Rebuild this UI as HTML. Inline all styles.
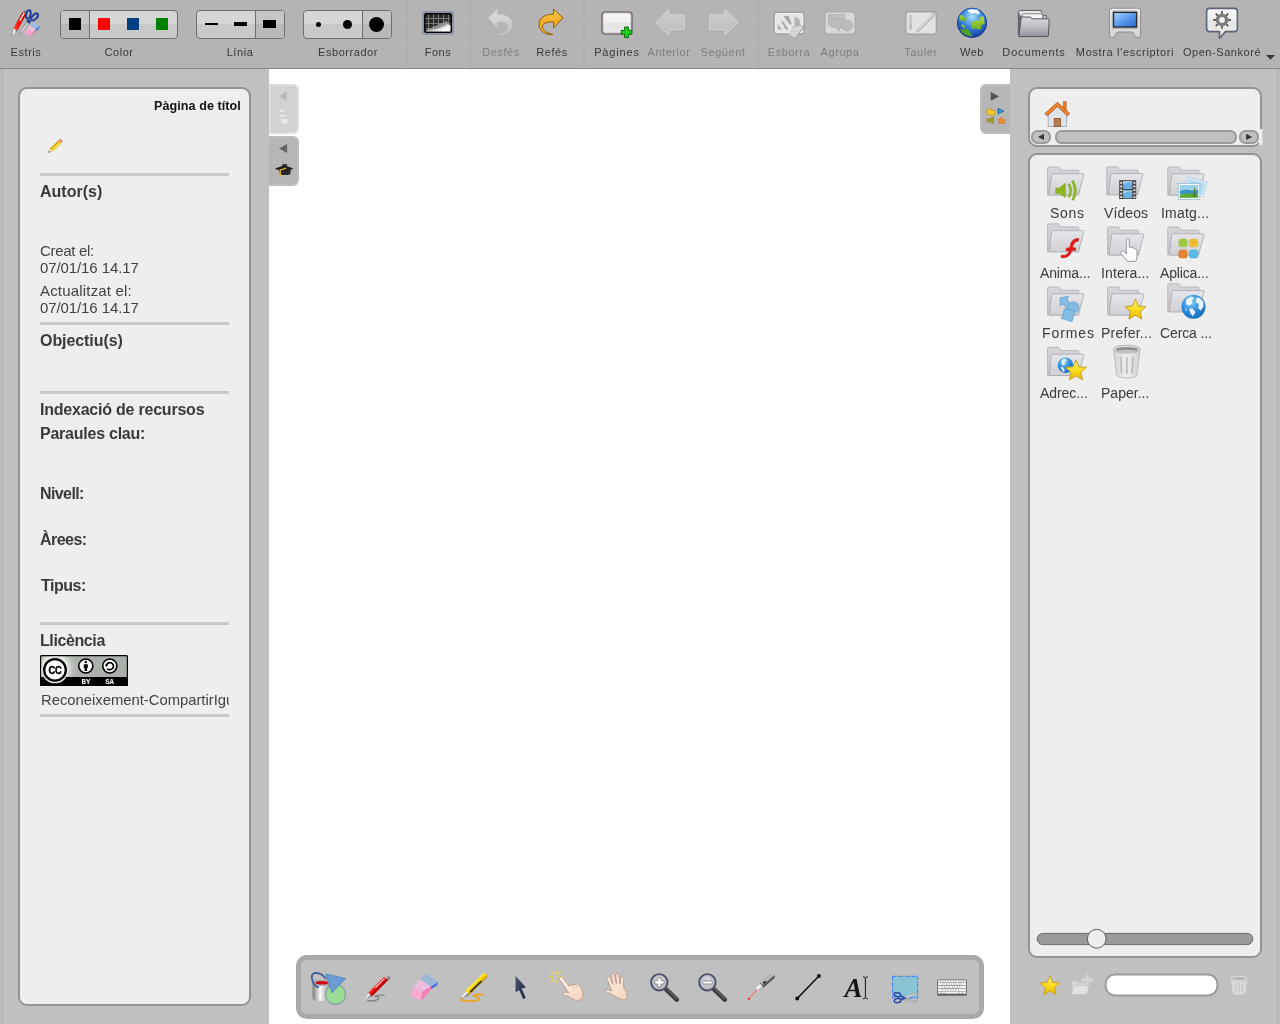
<!DOCTYPE html>
<html lang="ca">
<head>
<meta charset="utf-8">
<title>Open-Sankoré</title>
<style>
*{box-sizing:border-box;margin:0;padding:0}
html,body{width:1280px;height:1024px;overflow:hidden;background:#fff;font-family:"Liberation Sans",sans-serif;color:#3d3d3d}
.abs{position:absolute}
#toolbar{position:absolute;left:0;top:0;width:1280px;height:69px;background:#b4b4b4;border-bottom:1px solid #858585}
.tl{will-change:transform;position:absolute;top:45px;font-size:11px;line-height:14px;white-space:nowrap;transform:translateX(-50%);letter-spacing:.55px;color:#383838}
.tl.dis{color:#7e7e7e}
.sep{position:absolute;top:0;height:68px;width:2px;background:repeating-linear-gradient(#a1a1a1 0,#a1a1a1 1px,transparent 1px,transparent 3px)}
.grp{position:absolute;top:10px;height:29px;border:1px solid #6e6e6e;border-radius:4px;background:linear-gradient(#d6d6d6 0,#d6d6d6 13px,#c9c9c9 13px,#c9c9c9 100%);overflow:hidden}
.grp .sel{position:absolute;top:0;height:27px;background:linear-gradient(#c5c5c5 0,#c5c5c5 13px,#b9b9b9 13px,#b9b9b9 100%)}
.grp .dv{position:absolute;top:0;height:27px;width:1px;background:#6e6e6e}
.sq{position:absolute;top:7px;width:12px;height:12px}
#left{position:absolute;left:0;top:69px;width:269px;height:955px;background:#c0c0c0}
#left .edge{position:absolute;left:0;top:0;width:4px;height:955px;background:#b9b9b9}
#right{position:absolute;left:1010px;top:69px;width:270px;height:955px;background:#c0c0c0}
#right .edge{position:absolute;right:0;top:0;width:4px;height:955px;background:#b9b9b9}
.box{position:absolute;background:#eeeeee;border:2px solid #939393;border-radius:9px}
.hr{position:absolute;left:40px;width:189px;height:3px;background:#c8c8c8}
.lt{position:absolute;left:40px;white-space:nowrap;will-change:transform}
.h{font-weight:bold;font-size:16px;line-height:20px;color:#3a3a3a}
.n{font-size:15px;line-height:17px;color:#424242}
.tab{position:absolute;width:30px;border-radius:0 6px 6px 0}
.fl{position:absolute;font-size:14px;line-height:18px;white-space:nowrap;color:#3a3a3a;will-change:transform}
#palette{position:absolute;left:296px;top:955px;width:688px;height:64px;background:#c0c0c0;border:5px solid #a9a9a9;border-radius:11px}
</style>
</head>
<body>
<div id="toolbar">
  <div class="tl" style="left:25.5px">Estris</div>
  <div class="tl" style="left:119px">Color</div>
  <div class="tl" style="left:240px">Línia</div>
  <div class="tl" style="left:347.5px">Esborrador</div>
  <div class="tl" style="left:438px">Fons</div>
  <div class="tl dis" style="left:501px">Desfés</div>
  <div class="tl" style="left:552px">Refés</div>
  <div class="tl" style="left:617px;letter-spacing:.85px">Pàgines</div>
  <div class="tl dis" style="left:669px">Anterior</div>
  <div class="tl dis" style="left:723px">Següent</div>
  <div class="tl dis" style="left:789px">Esborra</div>
  <div class="tl dis" style="left:840px">Agrupa</div>
  <div class="tl dis" style="left:921px">Tauler</div>
  <div class="tl" style="left:972px">Web</div>
  <div class="tl" style="left:1034px;letter-spacing:.85px">Documents</div>
  <div class="tl" style="left:1125px;letter-spacing:.66px">Mostra l'escriptori</div>
  <div class="tl" style="left:1222px">Open-Sankoré</div>
  <div class="sep" style="left:406px"></div>
  <div class="sep" style="left:469px"></div>
  <div class="sep" style="left:583px"></div>
  <div class="sep" style="left:757px"></div>
  <!-- color group -->
  <div class="grp" style="left:60px;width:118px">
    <div class="sel" style="left:0;width:28px"></div><div class="dv" style="left:28px"></div>
    <div class="sq" style="left:8px;background:#000"></div>
    <div class="sq" style="left:37px;background:#ff0000"></div>
    <div class="sq" style="left:66px;background:#003f80"></div>
    <div class="sq" style="left:95px;background:#008000"></div>
  </div>
  <!-- line group -->
  <div class="grp" style="left:196px;width:89px">
    <div class="sel" style="left:59px;width:30px"></div><div class="dv" style="left:58px"></div>
    <div class="sq" style="left:8px;top:12px;height:2px;width:13px;background:#000"></div>
    <div class="sq" style="left:37px;top:11px;height:4px;width:13px;background:#000"></div>
    <div class="sq" style="left:66px;top:9px;height:8px;width:13px;background:#000"></div>
  </div>
  <!-- eraser group -->
  <div class="grp" style="left:303px;width:89px">
    <div class="sel" style="left:59px;width:30px"></div><div class="dv" style="left:58px"></div>
    <div class="sq" style="left:12px;top:11px;height:5px;width:5px;border-radius:50%;background:#000"></div>
    <div class="sq" style="left:39px;top:9px;height:9px;width:9px;border-radius:50%;background:#000"></div>
    <div class="sq" style="left:65px;top:6px;height:15px;width:15px;border-radius:50%;background:#000"></div>
  </div>
</div>

<div id="left"><div class="edge"></div></div>
<div id="right"><div class="edge"></div></div>

<!-- left panel box -->
<div class="box" style="left:18px;top:87px;width:233px;height:919px"></div>
<div class="lt" style="left:auto;right:1038.7px;top:99px;font-weight:bold;font-size:12.6px;line-height:15px;color:#111;letter-spacing:.05px">Pàgina de títol</div>
<div class="hr" style="top:173px"></div>
<div class="lt h" style="top:181.5px">Autor(s)</div>
<div class="lt n" style="top:242.3px;letter-spacing:-.3px">Creat el:</div>
<div class="lt n" style="top:259.3px;letter-spacing:-.1px">07/01/16 14.17</div>
<div class="lt n" style="top:282.3px;letter-spacing:.18px">Actualitzat el:</div>
<div class="lt n" style="top:299.3px;letter-spacing:-.1px">07/01/16 14.17</div>
<div class="hr" style="top:322px"></div>
<div class="lt h" style="top:331.3px;letter-spacing:-.07px">Objectiu(s)</div>
<div class="hr" style="top:391px"></div>
<div class="lt h" style="top:400px;letter-spacing:-.22px">Indexació de recursos</div>
<div class="lt h" style="top:424.2px;letter-spacing:-.24px">Paraules clau:</div>
<div class="lt h" style="top:484.1px;letter-spacing:-.6px">Nivell:</div>
<div class="lt h" style="top:530.2px;letter-spacing:-.55px">Àrees:</div>
<div class="lt h" style="top:576.1px;left:40.5px;letter-spacing:-.5px">Tipus:</div>
<div class="hr" style="top:622px"></div>
<div class="lt h" style="top:631px;letter-spacing:-.4px">Llicència</div>
<div class="lt n" style="top:692px;left:41px;width:187.5px;overflow:hidden;font-size:14.8px">Reconeixement-CompartirIgual</div>
<div class="hr" style="top:714px"></div>

<!-- tabs -->
<div class="tab" style="left:269px;top:84px;height:50px;background:#d2d2d0;border:2px solid #dedede"></div>
<div class="tab" style="left:269px;top:136px;height:50px;background:#b6b6b6;border:2px solid #bdbdbd;border-left:0"></div>
<div class="tab" style="left:980px;top:84px;height:50px;background:#b6b6b6;border:2px solid #bdbdbd;border-right:0;border-radius:6px 0 0 6px"></div>

<!-- right panel boxes -->
<div class="box" style="left:1028px;top:87px;width:234px;height:60px"></div>
<div class="box" style="left:1028px;top:153px;width:234px;height:805px"></div>

<div class="fl" style="left:1049.9px;top:203.6px;letter-spacing:0.73px">Sons</div>
<div class="fl" style="left:1104.0px;top:203.6px;letter-spacing:0.10px">Vídeos</div>
<div class="fl" style="left:1160.6px;top:203.6px;letter-spacing:0.21px">Imatg...</div>
<div class="fl" style="left:1040.3px;top:263.5px;letter-spacing:-0.14px">Anima...</div>
<div class="fl" style="left:1100.8px;top:263.5px;letter-spacing:0.12px">Intera...</div>
<div class="fl" style="left:1159.9px;top:263.5px;letter-spacing:-0.15px">Aplica...</div>
<div class="fl" style="left:1041.7px;top:323.5px;letter-spacing:0.90px">Formes</div>
<div class="fl" style="left:1100.8px;top:323.5px;letter-spacing:0.25px">Prefer...</div>
<div class="fl" style="left:1159.9px;top:323.5px;letter-spacing:-0.13px">Cerca ...</div>
<div class="fl" style="left:1040.3px;top:383.5px;letter-spacing:-0.06px">Adrec...</div>
<div class="fl" style="left:1100.8px;top:383.5px;letter-spacing:0.02px">Paper...</div>

<div id="palette"></div>

<svg id="ic" class="abs" style="left:0;top:0;will-change:transform" width="1280" height="1024" viewBox="0 0 1280 1024">
<defs>
<linearGradient id="gRed" x1="0" y1="0" x2="1" y2="0"><stop offset="0" stop-color="#ff5a4a"/><stop offset=".35" stop-color="#ff1a10"/><stop offset="1" stop-color="#b00000"/></linearGradient>
<linearGradient id="gSilver" x1="0" y1="0" x2="1" y2="0"><stop offset="0" stop-color="#8a8a8a"/><stop offset=".45" stop-color="#ffffff"/><stop offset="1" stop-color="#555"/></linearGradient>
<linearGradient id="gRedo" x1="0" y1="0" x2="0" y2="1"><stop offset="0" stop-color="#fbd84a"/><stop offset=".5" stop-color="#f0a828"/><stop offset="1" stop-color="#f4c030"/></linearGradient>
<linearGradient id="gUndo" x1="0" y1="0" x2="0" y2="1"><stop offset="0" stop-color="#dcdcdc"/><stop offset="1" stop-color="#c6c6c6"/></linearGradient>
<linearGradient id="gPage" x1="0" y1="0" x2="0" y2="1"><stop offset="0" stop-color="#f6f6f6"/><stop offset=".5" stop-color="#f0f0f0"/><stop offset=".5" stop-color="#e4e4e4"/><stop offset="1" stop-color="#e9e9e9"/></linearGradient>
<linearGradient id="gArr" x1="0" y1="0" x2="0" y2="1"><stop offset="0" stop-color="#cbcbcb"/><stop offset="1" stop-color="#bebebe"/></linearGradient>
<radialGradient id="gGlobe" cx=".5" cy=".3" r=".75"><stop offset="0" stop-color="#a6e2fa"/><stop offset=".45" stop-color="#3a86dc"/><stop offset=".85" stop-color="#1c48a8"/><stop offset="1" stop-color="#10307c"/></radialGradient>
<linearGradient id="gLand" x1="0" y1="0" x2="0" y2="1"><stop offset="0" stop-color="#b8dc3c"/><stop offset="1" stop-color="#6cb024"/></linearGradient>
<linearGradient id="gFold" x1="0" y1="0" x2="0" y2="1"><stop offset="0" stop-color="#dadae0"/><stop offset=".6" stop-color="#b6b6be"/><stop offset="1" stop-color="#8e8e98"/></linearGradient>
<linearGradient id="gScreen" x1="0" y1="0" x2="1" y2="1"><stop offset="0" stop-color="#a8d0fa"/><stop offset=".5" stop-color="#5c9cec"/><stop offset="1" stop-color="#2c68cc"/></linearGradient>
<linearGradient id="gMon" x1="0" y1="0" x2="0" y2="1"><stop offset="0" stop-color="#f2f2f2"/><stop offset="1" stop-color="#d4d4d4"/></linearGradient>
<linearGradient id="gCurl" x1="0" y1="0" x2="1" y2="1"><stop offset="0" stop-color="#b0b0b0"/><stop offset=".55" stop-color="#c8c8c8"/><stop offset=".8" stop-color="#ffffff"/></linearGradient>

<linearGradient id="gF1" x1="0" y1="0" x2="0" y2="1"><stop offset="0" stop-color="#d6d6da"/><stop offset="1" stop-color="#c6c6ca"/></linearGradient>
<linearGradient id="gF2" x1="0" y1="0" x2="0" y2="1"><stop offset="0" stop-color="#e6e6ea"/><stop offset="1" stop-color="#d0d0d4"/></linearGradient>
<g id="folder">
 <path d="M0.4 1.4 Q0.4 0.4 1.4 0.4 L11 0.4 Q12 0.4 12.2 1.4 L12.8 3.6 L30.4 3.6 Q31.6 3.6 31.6 4.8 L31.6 28.2 L0.4 28.2 Z" fill="url(#gF1)" stroke="#acacb2" stroke-width=".8"/>
 <path d="M5.6 7.2 L35.6 7.2 Q36.8 7.2 36.6 8.4 L31.4 27.4 Q31.1 28.5 30 28.5 L2.8 28.5 Q1.8 28.5 2 27.4 L4.4 8.2 Q4.6 7.2 5.6 7.2 Z" fill="url(#gF2)" stroke="#a6a6ac" stroke-width=".8"/>
</g>
<radialGradient id="gGlobe2" cx=".4" cy=".3" r=".8"><stop offset="0" stop-color="#8ad0f8"/><stop offset=".5" stop-color="#2c8cdc"/><stop offset="1" stop-color="#1464b4"/></radialGradient>
<linearGradient id="gStar" x1="0" y1="0" x2="0" y2="1"><stop offset="0" stop-color="#fff080"/><stop offset=".5" stop-color="#fcdc20"/><stop offset="1" stop-color="#e8b808"/></linearGradient>
<path id="star" d="M0 -10.5 L3 -3.6 L10.4 -3 L4.8 2 L6.5 9.4 L0 5.5 L-6.5 9.4 L-4.8 2 L-10.4 -3 L-3 -3.6 Z" fill="url(#gStar)" stroke="#c09a10" stroke-width=".9" stroke-linejoin="round"/>
<linearGradient id="gTrash" x1="0" y1="0" x2="1" y2="0"><stop offset="0" stop-color="#d4d4d4"/><stop offset=".5" stop-color="#f0f0f0"/><stop offset="1" stop-color="#d0d0d0"/></linearGradient>

<linearGradient id="gBucket" x1="0" y1="0" x2="1" y2="0"><stop offset="0" stop-color="#7c7c7c"/><stop offset=".45" stop-color="#f8f8f8"/><stop offset="1" stop-color="#9a9a9a"/></linearGradient>
<linearGradient id="gYel" x1="0" y1="0" x2="1" y2="0"><stop offset="0" stop-color="#ffe830"/><stop offset=".5" stop-color="#ffd400"/><stop offset="1" stop-color="#c89c00"/></linearGradient>
<linearGradient id="gDark" x1="0" y1="0" x2="1" y2="0"><stop offset="0" stop-color="#8c8c8c"/><stop offset=".4" stop-color="#e0e0e0"/><stop offset="1" stop-color="#3c3c3c"/></linearGradient>
<linearGradient id="gCur" x1="0" y1="0" x2="1" y2="1"><stop offset="0" stop-color="#4c5674"/><stop offset="1" stop-color="#1c2034"/></linearGradient>
<linearGradient id="gSkin" x1="0" y1="0" x2="1" y2="1"><stop offset="0" stop-color="#fdeee2"/><stop offset="1" stop-color="#f4d4bc"/></linearGradient>
<radialGradient id="gLens" cx=".5" cy=".4" r=".6"><stop offset="0" stop-color="#dcdce0"/><stop offset="1" stop-color="#b4b4ba"/></radialGradient>
<linearGradient id="gKey" x1="0" y1="0" x2="0" y2="1"><stop offset="0" stop-color="#f8f8f8"/><stop offset="1" stop-color="#d0d0d0"/></linearGradient>
<linearGradient id="gBub" x1="0" y1="0" x2="0" y2="1"><stop offset="0" stop-color="#f6f6f6"/><stop offset=".4" stop-color="#f0f0f0"/><stop offset=".4" stop-color="#e5e5e5"/><stop offset="1" stop-color="#ececec"/></linearGradient>
<radialGradient id="gGlow" cx=".5" cy=".5" r=".5"><stop offset="0" stop-color="#fff"/><stop offset=".5" stop-color="#f0f2ee" stop-opacity=".9"/><stop offset="1" stop-color="#abb1aa" stop-opacity="0"/></radialGradient>
<clipPath id="cpBadge"><rect x="41" y="656" width="86" height="21"/></clipPath>
<linearGradient id="gTipV" x1="0" y1="0" x2="0" y2="1"><stop offset="0" stop-color="#9a9a9a"/><stop offset=".35" stop-color="#ffffff"/><stop offset="1" stop-color="#4c4c4c"/></linearGradient>
<linearGradient id="gRedV" x1="0" y1="0" x2="0" y2="1"><stop offset="0" stop-color="#ff5040"/><stop offset=".4" stop-color="#f01010"/><stop offset="1" stop-color="#a00000"/></linearGradient>
<linearGradient id="gCapV" x1="0" y1="0" x2="0" y2="1"><stop offset="0" stop-color="#d8d8d8"/><stop offset=".5" stop-color="#a8a8a8"/><stop offset="1" stop-color="#5c5c5c"/></linearGradient>
<linearGradient id="gYelV" x1="0" y1="0" x2="0" y2="1"><stop offset="0" stop-color="#fff040"/><stop offset=".45" stop-color="#ffd400"/><stop offset="1" stop-color="#b88c00"/></linearGradient>
<linearGradient id="gLasF" x1="0" y1="0" x2="0" y2="1"><stop offset="0" stop-color="#c8c8c8"/><stop offset=".4" stop-color="#ffffff"/><stop offset="1" stop-color="#9a9a9a"/></linearGradient>
<linearGradient id="gLasB" x1="0" y1="0" x2="0" y2="1"><stop offset="0" stop-color="#8c8c8c"/><stop offset=".3" stop-color="#d0d0d0"/><stop offset=".7" stop-color="#6c6c6c"/><stop offset="1" stop-color="#2c2c2c"/></linearGradient>
</defs>

<!-- Estris -->
<g>
 <path d="M24.2 10.2 L26.8 11.6 L16.6 31.2 L12 36.4 L11.2 35.8 L12.6 29 Z" fill="#777"/>
 <path d="M22.2 12.2 L26.2 14.2 L17.6 30.6 L13.4 28.6 Z" fill="url(#gRed)"/>
 <path d="M23.6 12.6 L24.8 13.2 L20.2 21.2 L19.4 20.6 Z" fill="#fff"/>
 <path d="M13.4 28.6 L17.6 30.6 L12 36.4 L11.2 35.8 Z" fill="url(#gSilver)"/>
 <path d="M27.4 20.6 L29.2 21.6 L21.4 34 L19.8 33.2 Z" fill="#666"/>
 <path d="M27.6 21.4 L28.6 22 L21.4 33.2 L20.6 32.6 Z" fill="#fff"/>
 <ellipse cx="28.4" cy="14.4" rx="2.2" ry="4.2" transform="rotate(12 28.4 14.4)" fill="none" stroke="#233c94" stroke-width="2"/>
 <ellipse cx="34.7" cy="16.9" rx="2.2" ry="4.2" transform="rotate(44 34.7 16.9)" fill="none" stroke="#233c94" stroke-width="2"/>
 <path d="M26.4 20 L30.4 19.4 L31 22.6 L29 23.8 L27 22 Z" fill="#233c94"/>
 <path d="M30 25.4 L33.6 22.2 L39.6 26 L35.6 29.4 Z" fill="#9cbce0"/>
 <path d="M35.6 29.4 L39.6 26 L39.4 28 L35.6 31.6 Z" fill="#3c64d0"/>
 <path d="M27 28.4 L30 25.4 L35.6 29.4 L32.6 32.4 Z" fill="#ecbcdc"/>
 <path d="M25 31.2 L27 28.4 L32.6 32.4 L30.4 36.6 L24.6 33.4 Z" fill="#f4a4cc"/>
 <path d="M32.6 32.4 L35.6 29.4 L35.6 31.6 L30.4 36.6 Z" fill="#e874a8"/>
</g>

<!-- Fons -->
<g>
 <rect x="422" y="11" width="32" height="24" rx="3.5" fill="#8c93a6"/>
 <rect x="424" y="13" width="28" height="20" rx="2.5" fill="#000"/>
 <rect x="425.5" y="14.5" width="25" height="17" rx="1.5" fill="#2c2c2c"/>
 <path d="M428.5 14.5V31.5M433.5 14.5V31.5M438.5 14.5V31.5M443.5 14.5V31.5M448.5 14.5V31.5M425.5 18.5H450.5M425.5 23.5H450.5M425.5 28.5H450.5" stroke="#8c8c8c" stroke-width=".8" fill="none"/>
 <path d="M426 30.6 L447 21 L447.6 23.6 L450.6 25.4 L450.4 31.6 L426 31.6 Z" fill="url(#gCurl)"/>
 <path d="M426 30.6 L447 21 L447.8 24 L438 28.4 Z" fill="#8e8e8e"/>
</g>

<!-- Desfes / Refes -->
<path d="M553.6 9 L562.9 17.8 L553.6 27.9 L553.6 22 C547 21.7 542.6 23.2 542.4 26.6 C542.4 30.2 547 33.4 553 34.5 C545 35.4 539 30.4 539 24.2 C539 17.6 545 14.2 553.6 14.2 Z" fill="url(#gRedo)" stroke="#8e5a10" stroke-width="1" stroke-linejoin="round"/>
<path d="M497.4 9 L488.1 17.8 L497.4 27.9 L497.4 22 C504 21.7 508.4 23.2 508.6 26.6 C508.6 30.2 504 33.4 498 34.5 C506 35.4 512 30.4 512 24.2 C512 17.6 506 14.2 497.4 14.2 Z" fill="url(#gUndo)" stroke="#c2c2c2" stroke-width="1" stroke-linejoin="round"/>

<!-- Pagines -->
<g>
 <rect x="602" y="12" width="30" height="22" rx="3" fill="url(#gPage)" stroke="#70737f" stroke-width="1.6"/>
 <rect x="602.9" y="12.9" width="28.2" height="20.2" rx="2.4" fill="none" stroke="#b08474" stroke-width=".6"/>
 <path d="M624.6 27 h3.8 v3.4 h3.4 v3.8 h-3.4 v3.4 h-3.8 v-3.4 h-3.4 v-3.8 h3.4 Z" fill="#1dd01d" stroke="#0b6e0b" stroke-width="1" stroke-linejoin="round"/>
</g>
<!-- Anterior / Seguent -->
<path d="M655.6 22.4 L669 9.2 L669 14.8 L684.4 14.8 L684.4 30 L669 30 L669 35.6 Z" transform="translate(.6 1)" fill="#a6a6a6" stroke="#a6a6a6" stroke-width="1" stroke-linejoin="round" opacity=".7"/>
<path d="M655.6 22.4 L669 9.2 L669 14.8 L684.4 14.8 L684.4 30 L669 30 L669 35.6 Z" fill="url(#gArr)" stroke="#d3d3d3" stroke-width="1" stroke-linejoin="round"/>
<path d="M738.5 22.4 L724.8 9.2 L724.8 14.8 L709.8 14.8 L709.8 30 L724.8 30 L724.8 35.6 Z" transform="translate(.6 1)" fill="#a6a6a6" stroke="#a6a6a6" stroke-width="1" stroke-linejoin="round" opacity=".7"/>
<path d="M738.5 22.4 L724.8 9.2 L724.8 14.8 L709.8 14.8 L709.8 30 L724.8 30 L724.8 35.6 Z" fill="url(#gArr)" stroke="#d3d3d3" stroke-width="1" stroke-linejoin="round"/>

<!-- Esborra -->
<g>
 <rect x="774.2" y="12.4" width="29.8" height="21.4" rx="2.6" fill="#f0f0f0" stroke="#9e9e9e" stroke-width="1.3"/>
 <rect x="775.8" y="14" width="26.2" height="18.2" rx="1.4" fill="#e6e6e6"/>
 <path d="M778 24.6 L781.9 29.6 L778.4 29.6 L777.8 28 Z M780.9 20.8 L783.1 21.4 L788.75 29.6 L785.6 29.6 Z M783.4 16.1 L788.75 16.1 L791.9 24.25 L790 24.6 Z" fill="#a8a8a8"/>
 <path d="M794.1 17.1 L797.2 17.2 L800 20.5 L800.2 23.6 L801.25 26.1 L791.25 28 L794.7 24.9 Z" fill="#b6b6b6"/>
 <path d="M801.25 26.1 L804.1 25.5 L804.4 27.4 L795.4 37.8 L794.4 37.4 Z" fill="#989898"/>
 <path d="M789.1 33.9 L791.25 28 L801.25 26.1 L803.4 26.9 L795 37.7 Z" fill="#d6d6d6"/>
 <path d="M790.4 31 L799.6 31.6" stroke="#c8c8c8" stroke-width=".8"/>
</g>
<!-- Agrupa -->
<g>
 <rect x="825" y="12" width="30" height="22" rx="3" fill="#d8d8d8" stroke="#a8a8a8" stroke-width="1"/>
 <rect x="828.5" y="14.5" width="16" height="10.5" fill="#c0c0c0" stroke="#b0b0b0" stroke-width=".8"/>
 <path d="M831.5 19 H842.3 V27.3 H840.4 L838.6 31.2 L836.4 27.3 H831.5 Z" fill="#bcbcbc" stroke="#adadad" stroke-width=".8"/>
 <circle cx="847" cy="25.4" r="5.5" fill="#bcbcbc" stroke="#adadad" stroke-width=".8"/>
</g>

<!-- Tauler -->
<g>
 <rect x="905.8" y="11.8" width="30.6" height="22.4" rx="3" fill="#e2e2e2" stroke="#a2a2a2" stroke-width="1.4"/>
 <rect x="909.2" y="15" width="2.6" height="7.6" fill="#c6c6c6"/><rect x="909.2" y="22.6" width="2.6" height="7" fill="#b8b8b8"/>
 <path d="M933.4 13 L935.4 15 L919.4 31.2 L916.2 32.6 L917.4 29.2 Z" fill="#b4b4b4"/>
 <path d="M933 14.6 L918.6 29.6" stroke="#f4f4f4" stroke-width="1"/>
</g>
<!-- Web -->
<g>
 <circle cx="972" cy="22.8" r="15" fill="url(#gGlobe)"/>
 <path d="M959.5 16.3 L961.6 14.2 L963.8 17.2 L968 19.3 L963.8 21 L959.5 20.6 Z" fill="url(#gLand)"/>
 <path d="M980 17.2 L983.5 15.9 L984.8 23.2 L981 25.8 L981 29.2 L977.5 29.6 L975.8 28.4 L971 28.4 L971.9 22.3 L975.8 20.6 L979.6 20.6 Z" fill="url(#gLand)"/>
 <path d="M961.2 24.9 L962.9 24 L965.5 27.5 L963.8 27.9 Z" fill="#8cc830"/>
 <path d="M959.9 29.2 L968 29.2 L972.8 36.6 L966.3 35.6 L961.4 31.8 Z" fill="#52a024"/>
 <path d="M967.2 10.6 L970 9.2 L977.5 9.4 L980 13.6 L978 14.6 L975.8 13 L970.6 13.6 Z" fill="#f4f8fc"/>
 <circle cx="972" cy="22.8" r="14.6" fill="none" stroke="#0e2a78" stroke-width=".8" opacity=".7"/>
</g>
<!-- Documents -->
<g>
 <path d="M1018.4 12.6 Q1018.4 10.4 1020.6 10.4 L1039.6 10.4 Q1041.8 10.4 1041.8 12.6 L1041.8 20 L1018.4 34 Z" fill="#e4e4e8" stroke="#5c5c64" stroke-width="1"/>
 <path d="M1022 16 Q1022 13.8 1024.2 13.8 L1041 13.8 Q1043 13.8 1043 16 L1043 22 L1022 22 Z" fill="#f6f6f8" stroke="#6a6a72" stroke-width=".8"/>
 <rect x="1043" y="15.6" width="3.6" height="5" fill="#c4c4cc" stroke="#5c5c64" stroke-width=".8"/>
 <path d="M1018.4 13 L1018.4 36.4 L1022 36.4 L1022 18 Z" fill="#6e6e76" stroke="#55555c" stroke-width=".6"/>
 <path d="M1021.4 17 L1030.6 17 L1031.9 18.8 L1048.2 18.8 Q1049.4 18.8 1049.2 20 L1048.4 35.4 Q1048.3 36.6 1047 36.6 L1019.6 36.6 Q1018.4 36.6 1018.8 35.4 Z" fill="url(#gFold)" stroke="#55555c" stroke-width="1" stroke-linejoin="round"/>
</g>
<!-- Mostra l'escriptori -->
<g>
 <path d="M1112.4 8.2 L1137.6 8.2 Q1140.6 8.2 1140.6 11.2 L1140.6 35.4 Q1140.6 37.4 1138.6 37.4 L1136.6 37.4 Q1134.8 37.4 1134.4 35 Q1134 32 1131.4 32 L1118.6 32 Q1116 32 1115.6 35 Q1115.2 37.4 1113.4 37.4 L1111.4 37.4 Q1109.4 37.4 1109.4 35.4 L1109.4 11.2 Q1109.4 8.2 1112.4 8.2 Z" fill="url(#gMon)" stroke="#8a8a8a" stroke-width="1"/>
 <rect x="1111.8" y="10.6" width="26.4" height="18.2" rx="1.5" fill="#a2a6ae"/>
 <rect x="1113.2" y="11.9" width="23.6" height="15.6" fill="#101010"/>
 <rect x="1114.2" y="12.9" width="21.7" height="13.6" fill="url(#gScreen)"/>
</g>
<!-- Open-Sankore -->
<g>
 <path d="M1209.6 8.4 L1234.4 8.4 Q1237.4 8.4 1237.4 11.4 L1237.4 28.6 Q1237.4 31.6 1234.4 31.6 L1225.4 31.6 L1219.6 38.2 L1219.4 31.6 L1209.6 31.6 Q1206.6 31.6 1206.6 28.6 L1206.6 11.4 Q1206.6 8.4 1209.6 8.4 Z" fill="url(#gBub)" stroke="#5c6478" stroke-width="1.6" stroke-linejoin="round"/>
 <path d="M1222 11 V28.8 M1213.1 19.9 H1230.9 M1215.7 13.6 L1228.3 26.2 M1228.3 13.6 L1215.7 26.2" stroke="#4a4a4a" stroke-width="1.6"/>
 <circle cx="1222" cy="19.9" r="4.6" fill="#f0f0f0" stroke="#7c7c7c" stroke-width="3.4"/>
 <path d="M1266 55 L1275 55 L1270.5 59.8 Z" fill="#3a3a3a"/>
</g>

<!-- pencil -->
<g>
 <path d="M48.2 152.8 L50 148.6 L53 151.4 Z" fill="#f2c8a0"/>
 <path d="M48.2 152.8 L48.9 151 L50 152 Z" fill="#222"/>
 <path d="M50 148.6 L58.2 140.6 L61 143.4 L53 151.4 Z" fill="#e8c820"/>
 <path d="M50 148.6 L58.2 140.6 L59.1 141.5 L50.9 149.5 Z" fill="#d0a430"/>
 <path d="M51.4 150 L59.6 142 L60.4 142.8 L52.2 150.8 Z" fill="#f4e840"/>
 <path d="M58.2 140.6 L59.8 139 Q60.6 138.4 61.4 139.2 L62.4 140.2 Q63 141 62.4 141.7 L61 143.4 Z" fill="#f08c74"/>
</g>
<!-- left tabs -->
<g>
 <path d="M286.6 91.8 L286.6 101 L279 96.5 Z" fill="#b8b8b8"/>
 <rect x="279" y="109" width="6" height="3" fill="#e6e6e6" stroke="#c8c8c8" stroke-width=".5"/>
 <rect x="280" y="114.2" width="6.6" height="3" fill="#e6e6e6" stroke="#c8c8c8" stroke-width=".5"/>
 <rect x="281" y="118.6" width="7" height="5.4" fill="#e8e8e8" stroke="#c8c8c8" stroke-width=".5"/>
 <path d="M279.4 111 L281.4 124" stroke="#dcdcdc" stroke-width="1"/>
 <path d="M287.1 144 L287.1 153.1 L279 148.6 Z" fill="#666"/>
 <path d="M279 170 L290.9 170 L290.2 174.2 Q285 176 279.8 174.2 Z" fill="#2a2a2a"/>
 <path d="M274.7 168.7 L284.4 164.9 L293.5 168.7 L284.4 172 Z" fill="#222"/>
 <rect x="282.4" y="164.2" width="4.6" height="1.6" fill="#222"/>
 <path d="M286 168.2 L280.2 170.2 L280.2 176.2" stroke="#e8b820" stroke-width="1.3" fill="none"/>
</g>
<!-- right tab -->
<g>
 <path d="M990.8 92 L999 96.4 L990.8 100.8 Z" fill="#505050"/>
 <path d="M987 109.8 L987 114.9 L994.9 114.9 L994.9 110.4 L991 110.4 L990.2 108.7 L987.6 108.7 Z" fill="#f0cc30" stroke="#c89418" stroke-width=".7"/>
 <path d="M998.3 108.1 L998.3 114.9 M998.3 108.6 L1003.8 111.2 L998.3 113.4 Z" fill="#3c9cd0" stroke="#1c78a8" stroke-width="1"/>
 <path d="M987 118.8 L989.6 118.8 L993.6 117 L993.6 123.8 L989.6 121.8 L987 121.8 Z" fill="#9c9c28" stroke="#84841c" stroke-width=".6"/>
 <path d="M1001.5 117 L1002.8 119.6 L1005.4 119.9 L1003.5 121.8 L1004 124 L1001.5 122.8 L999 124 L999.5 121.8 L997.6 119.9 L1000.2 119.6 Z" fill="#f09430" stroke="#e06c18" stroke-width=".8"/>
</g>
<!-- CC badge -->
<g>
 <rect x="40" y="655" width="88" height="31" rx="2" fill="#000"/>
 <rect x="41" y="656" width="86" height="21" fill="#abb1aa"/>
 <path d="M41 677 L41 685 L127 685 L127 677 Z" fill="#000"/>
 <circle cx="55" cy="668" r="24" fill="url(#gGlow)" clip-path="url(#cpBadge)"/>
 <rect x="40" y="677" width="88" height="9" rx="0" fill="#000"/>
 <rect x="40.6" y="655.6" width="86.8" height="29.8" rx="1.6" fill="none" stroke="#000" stroke-width="1.2"/>
 <circle cx="55" cy="669.9" r="13.4" fill="#dfe3dd"/>
 <circle cx="55" cy="669.9" r="10.8" fill="#fff" stroke="#000" stroke-width="2.3"/>
 <text transform="translate(55 673.8) scale(.86 1)" x="0" y="0" font-family="Liberation Sans, sans-serif" font-weight="bold" font-size="10.8" text-anchor="middle" letter-spacing="-.2" fill="#000" stroke="#000" stroke-width=".45">CC</text>
 <circle cx="85.8" cy="666" r="7" fill="#fff" stroke="#000" stroke-width="1.6"/>
 <circle cx="85.8" cy="662" r="1.2" fill="#000"/>
 <path d="M83.8 664.2 H87.8 V668 H87 V671 H84.6 V668 H83.8 Z" fill="#000"/>
 <circle cx="109.8" cy="666" r="7" fill="#fff" stroke="#000" stroke-width="1.6"/>
 <path d="M106.4 665.2 A3.6 3.6 0 1 1 107.2 668.6" fill="none" stroke="#000" stroke-width="1.7"/>
 <path d="M104.8 664.8 L108.2 664.8 L106.5 667 Z" fill="#000"/>
 <text x="86" y="684.2" font-family="Liberation Mono, monospace" font-weight="bold" font-size="7.4" text-anchor="middle" fill="#fff">BY</text>
 <text x="109.6" y="684.2" font-family="Liberation Mono, monospace" font-weight="bold" font-size="7.4" text-anchor="middle" fill="#fff">SA</text>
</g>

<!-- home + scrollbar -->
<g>
 <rect x="1259" y="129" width="3.4" height="16" fill="#eeeeee"/>
 <path d="M1048.2 114.6 L1057.4 106.2 L1066.6 114.6 L1066.6 126.4 L1048.2 126.4 Z" fill="#dfe3ea" stroke="#a2a6b0" stroke-width=".9"/>
 <rect x="1054.2" y="118.4" width="6.2" height="8" fill="#b47c54" stroke="#8e4e24" stroke-width=".8"/>
 <path d="M1063.4 109 L1063.4 102 Q1063.4 101.4 1064 101.4 L1065.6 101.4 Q1066.2 101.4 1066.2 102 L1066.2 111.6 Z" fill="#ee7c24" stroke="#a85010" stroke-width=".6"/>
 <path d="M1044.9 113.6 L1057.4 102.3 L1069.8 113.6 L1067.5 115.8 L1057.4 106.4 L1047.3 115.8 Z" fill="#f08430" stroke="#a85010" stroke-width=".8" stroke-linejoin="round"/>
 <rect x="1032" y="131" width="18" height="12" rx="5.5" fill="#c0c0c0" stroke="#999" stroke-width="2"/>
 <path d="M1044 133.8 L1044 139.9 L1037.9 136.9 Z" fill="#333"/>
 <rect x="1056" y="131" width="180" height="12" rx="5.5" fill="#c0c0c0" stroke="#999" stroke-width="2"/>
 <rect x="1240" y="131" width="18" height="12" rx="5.5" fill="#c0c0c0" stroke="#999" stroke-width="2"/>
 <path d="M1246.1 133.8 L1246.1 139.9 L1252.2 136.9 Z" fill="#333"/>
</g>
<!-- folders -->
<use href="#folder" x="1047.2" y="166.6"/>
<use href="#folder" x="1106.3" y="166.4"/>
<use href="#folder" x="1167.4" y="166.6"/>
<use href="#folder" x="1047.2" y="223.4"/>
<use href="#folder" x="1107.2" y="226.6"/>
<use href="#folder" x="1167.4" y="226.6"/>
<use href="#folder" x="1047.2" y="286.6"/>
<use href="#folder" x="1107.2" y="286.6"/>
<use href="#folder" x="1167.4" y="283.4"/>
<use href="#folder" x="1047.2" y="347"/>
<!-- Sons -->
<g fill="#8cb820" stroke="#7aa414" stroke-width=".5">
 <path d="M1055.6 188 L1059.4 188 L1065.4 183.2 L1065.4 197.6 L1059.4 193.4 L1055.6 193.4 Z"/>
 <path d="M1068 184.6 Q1071.6 190.6 1068 196.8 L1069.6 197.6 Q1073.8 190.6 1069.6 183.6 Z"/>
 <path d="M1071.6 181.2 Q1076.6 190.6 1071.8 199.6 L1073.6 200.4 Q1079.4 190.6 1073.4 180.2 Z"/>
</g>
<!-- Videos -->
<g>
 <rect x="1119.2" y="180.2" width="17" height="18.8" fill="#454545"/>
 <rect x="1123.2" y="181.2" width="9" height="7.8" fill="#6cb0e4"/><rect x="1123.2" y="190.4" width="9" height="7.8" fill="#6cb0e4"/>
 <path d="M1123.2 184.6 Q1127 182 1132.2 182.4 L1132.2 181.2 L1123.2 181.2 Z M1123.2 193.8 Q1127 191.2 1132.2 191.6 L1132.2 190.4 L1123.2 190.4 Z" fill="#a8d4f4"/>
 <path d="M1120.2 182h2v1.8h-2zM1120.2 185.6h2v1.8h-2zM1120.2 189.2h2v1.8h-2zM1120.2 192.8h2v1.8h-2zM1120.2 196.2h2v1.8h-2zM1133.4 182h2v1.8h-2zM1133.4 185.6h2v1.8h-2zM1133.4 189.2h2v1.8h-2zM1133.4 192.8h2v1.8h-2zM1133.4 196.2h2v1.8h-2z" fill="#e8e8e8"/>
</g>
<!-- Imatges -->
<g>
 <g transform="rotate(14 1194 188)"><rect x="1184.6" y="179" width="20.6" height="15.4" fill="#f4f8fc" stroke="#9cc0d8" stroke-width=".7"/><rect x="1186" y="180.4" width="17.8" height="12.6" fill="#b4dcf0"/></g>
 <rect x="1178.2" y="183.4" width="21.6" height="16" fill="#fafcfe" stroke="#8cb4cc" stroke-width=".7"/>
 <rect x="1179.8" y="185" width="18.4" height="12.8" fill="#9cd0ec"/>
 <path d="M1179.8 191.2 Q1186 188.2 1191 190.6 L1198.2 190 L1198.2 194 L1179.8 194 Z" fill="#3c94c4"/>
 <path d="M1179.8 194.8 Q1189 192.4 1198.2 194.6 L1198.2 197.8 L1179.8 197.8 Z" fill="#5cac2c"/>
 <path d="M1194.6 186.4 L1196.4 196.6 L1192.8 196.6 Z" fill="#4c7c34"/>
</g>
<!-- Flash -->
<path d="M1078.4 238.4 Q1071.4 238.6 1070.4 245.6 L1069.8 248 L1066.6 248 L1066 250.4 L1069.2 250.4 Q1067.8 256.4 1061.2 255.2 L1061.2 257.6 Q1069.8 258.6 1071.6 250.4 L1075.2 250.4 L1075.8 248 L1072.4 248 Q1073.2 241.4 1078.2 241 Z" fill="#dc1c1c" stroke="#dc1c1c" stroke-width=".9"/>
<!-- Hand pointer -->
<path d="M1126.4 240.2 Q1126.4 238.8 1127.8 238.8 Q1129.2 238.8 1129.2 240.2 L1129.4 247.4 Q1130.8 246.2 1132 247.8 Q1133.6 247 1134.6 248.8 Q1136.6 248.4 1137 250.6 L1137 256.4 Q1136.8 259.4 1135.6 261.4 L1127.4 261.4 Q1124.8 257.8 1121 253.6 Q1120 252 1121.6 251.2 Q1123 250.6 1124.6 252.2 L1126.4 254 Z" fill="#fdfdfd" stroke="#8c8c94" stroke-width=".9" stroke-linejoin="round"/>
<!-- Apps -->
<g>
 <rect x="1178.8" y="239" width="8.4" height="7.8" rx="2.2" fill="#a4cc44" stroke="#8cb430" stroke-width=".5"/>
 <rect x="1189.4" y="239" width="8.4" height="7.8" rx="2.2" fill="#f4c434" stroke="#dca820" stroke-width=".5"/>
 <rect x="1178.8" y="249.9" width="8.4" height="8.2" rx="2.2" fill="#e48434" stroke="#cc6c20" stroke-width=".5"/>
 <rect x="1189.4" y="249.9" width="8.4" height="8.2" rx="2.2" fill="#54bce4" stroke="#3ca4cc" stroke-width=".5"/>
 <circle cx="1183" cy="243" r="1.6" fill="none" stroke="#88ac30" stroke-width=".6"/><rect x="1192" y="241.4" width="3.2" height="3.2" fill="none" stroke="#d4a020" stroke-width=".6"/>
</g>
<!-- Formes -->
<g fill="#84bce4" stroke="#5c9ccc" stroke-width=".7" stroke-linejoin="round">
 <path d="M1061 297 L1069.4 296.6 L1067.6 300 L1071.8 306.2 L1067 309.6 L1063 303.4 L1059.8 305 Z" transform="rotate(-8 1066 303)"/>
 <circle cx="1073.4" cy="307.4" r="5.6"/>
 <path d="M1064.6 308.6 L1075 311.4 L1072 321.6 L1061.4 318.6 Z"/>
</g>
<use href="#star" x="1135.4" y="309.7"/>
<!-- Cerca globe -->
<g>
 <circle cx="1193.5" cy="306.7" r="12" fill="url(#gGlobe2)"/>
 <path d="M1186 300 Q1188 297 1192 296.4 L1194 298.6 L1191.4 300.4 L1192.6 303 L1189.4 305.6 L1186.2 304.4 Z M1196.4 297.4 L1200 298 L1203.6 302 L1203.4 306.8 L1200.8 310.6 L1198.2 308.4 L1198.8 304 L1196 302.4 Z M1189 308.6 L1192.8 308.8 L1195.4 312 L1193 316.2 L1190.6 313.6 Z M1185 307 L1187 310.4 L1186 311.4 Z" fill="#f4fafe" opacity=".95"/>
</g>
<!-- Adreces -->
<g>
 <circle cx="1065.5" cy="365.3" r="7.7" fill="url(#gGlobe2)"/>
 <path d="M1061 361 Q1063 358.6 1066 358.6 L1067 360.6 L1064.6 362 L1065 364.4 L1062.4 365.6 Z M1060.4 367 L1063.6 367.6 L1065 371 L1063 372 Z" fill="#f0f8fe" opacity=".9"/>
 <use href="#star" x="1076" y="370.4"/>
</g>
<!-- Paperera -->
<g>
 <path d="M1113.6 349.6 L1140 349.6 L1137.2 374.6 Q1136.8 377.8 1126.8 377.8 Q1117 377.8 1116.6 374.6 Z" fill="url(#gTrash)" stroke="#b4b4b4" stroke-width=".8"/>
 <ellipse cx="1126.8" cy="349.2" rx="13.6" ry="3.9" fill="#e4e4e4" stroke="#b0b0b0" stroke-width="1"/>
 <ellipse cx="1126.8" cy="349.6" rx="11.4" ry="2.6" fill="#8e8e8e"/>
 <ellipse cx="1126.8" cy="351.4" rx="10.4" ry="1.6" fill="#c0c0c0"/>
 <path d="M1120.6 357.4 L1121.6 372.6 M1126.8 357.8 L1126.8 373.2 M1133 357.4 L1132 372.6" stroke="#bcbcbc" stroke-width="1.8" stroke-linecap="round"/>
</g>
<!-- slider -->
<g>
 <rect x="1037.2" y="933.4" width="215.6" height="11.2" rx="5.6" fill="#9a9a9a" stroke="#6c6c6c" stroke-width="1"/>
 <circle cx="1096.7" cy="938.8" r="9.4" fill="#eeeeee" stroke="#5c5c5c" stroke-width="1"/>
</g>
<!-- bottom icons -->
<g>
 <use href="#star" x="1049.9" y="985.8" transform="translate(1049.9 985.8) scale(.94) translate(-1049.9 -985.8)"/>
 <path d="M1071.4 981.8 Q1071.4 980.8 1072.4 980.8 L1077.4 980.8 L1078.6 982.6 L1086.6 982.6 L1086.6 994.6 L1071.4 994.6 Z" fill="#d6d6d6" stroke="#bcbcbc" stroke-width=".7"/>
 <path d="M1073.4 985.4 L1089.4 985.4 L1086.6 994.6 L1071.6 994.6 Z" fill="#e2e2e2" stroke="#c0c0c0" stroke-width=".7"/>
 <path d="M1085.6 973.8 h3.6 v4 h4.2 v3.6 h-4.2 v4 h-3.6 v-4 h-4.2 v-3.6 h4.2 Z" fill="#d2d2d2" stroke="#c4c4c4" stroke-width=".6"/>
 <rect x="1105.6" y="974.4" width="111.8" height="21" rx="9.5" fill="#ffffff" stroke="#9a9a9a" stroke-width="2"/>
 <path d="M1230.6 978.6 L1247.6 978.6 L1245.6 993 Q1245.4 995 1239.2 995 Q1233 995 1232.6 993 Z" fill="#dadada" stroke="#c4c4c4" stroke-width=".7"/>
 <ellipse cx="1239.1" cy="978.2" rx="8.8" ry="2.8" fill="#e2e2e2" stroke="#c0c0c0" stroke-width=".8"/>
 <ellipse cx="1239.1" cy="978.4" rx="7" ry="1.7" fill="#b4b4b4"/>
 <path d="M1235.4 983.2 L1236 992 M1239.1 983.4 L1239.1 992.4 M1242.8 983.2 L1242.2 992" stroke="#c6c6c6" stroke-width="1.3" stroke-linecap="round"/>
</g>

<!-- palette: bucket/shapes -->
<g>
 <path d="M312.6 982.6 L312.6 998 Q312.6 1001 321 1001 Q329.4 1001 329.4 998 L329.4 982.6 Z" fill="url(#gBucket)"/>
 <ellipse cx="321" cy="982.8" rx="8.4" ry="2.6" fill="#b8b8b8" stroke="#888" stroke-width=".5"/>
 <ellipse cx="322" cy="982.8" rx="6.6" ry="1.8" fill="#d00010"/>
 <path d="M313 982 Q309.4 973.4 316 972.8 Q322 973 326 979 M313 982 Q314.6 986.4 319 987.4" fill="none" stroke="#3c5c9c" stroke-width="1.8"/>
 <circle cx="335.5" cy="994.4" r="10" fill="#9cdc94" stroke="#5c84a4" stroke-width=".8"/>
 <path d="M325.9 973.9 L345.6 978.6 L332 992.8 Z" fill="#6c9cd4" stroke="#4c7cb4" stroke-width=".8" stroke-linejoin="round"/>
</g>
<!-- pen -->
<g>
 <path d="M367 1000.8 Q376 1001.4 378.6 998.8 Q380 996.6 374.6 996.4 Q379 994.8 385 995" fill="none" stroke="#6c6c6c" stroke-width="1.1" opacity=".85"/>
 <g transform="translate(364.1 1000.4) rotate(-45)">
  <path d="M0 0 L8.8 -2.5 L8.8 2.5 Z" fill="url(#gTipV)"/>
  <rect x="8.6" y="-2.7" width="22.6" height="5.4" fill="url(#gRedV)"/>
  <rect x="17" y="-1.5" width="13" height="1" fill="#fff" opacity=".95"/>
  <path d="M31 -2.7 L33.4 -2.7 Q35.4 -2.7 35.4 0 Q35.4 2.7 33.4 2.7 L31 2.7 Z" fill="url(#gCapV)"/>
 </g>
</g>
<!-- eraser -->
<g>
 <path d="M419.7 979.3 L426.2 973.5 L437.9 981.7 L430.9 986.4 Z" fill="#9cb8d8"/>
 <path d="M430.9 986.4 L437.9 981.7 L437.3 985.2 L430.9 989.6 Z" fill="#4c74e4"/>
 <path d="M413.3 987 L419.7 979.3 L430.9 986.4 L422.7 991.6 Z" fill="#ecbcdc"/>
 <path d="M413.3 987 L422.7 991.6 L420.9 1001 L410.9 995.7 Z" fill="#fcacd0"/>
 <path d="M422.7 991.6 L430.9 986.4 L430.9 989.6 L420.9 1001 Z" fill="#f47cb0"/>
</g>
<!-- marker -->
<g>
 <path d="M461 1000.2 Q472 1002.4 478 1000.2 Q481 998.4 475 996.6 Q472 995.4 476 994.6 Q480 993.8 482.8 994.8" fill="none" stroke="#eca424" stroke-width="2.1" stroke-linecap="round" opacity=".9"/>
 <g transform="translate(460.7 999.3) rotate(-44.4)">
  <path d="M0 0 L2.4 -1 L2.4 1 Z" fill="#b88c00"/>
  <path d="M2.2 -0.9 L9.6 -2.6 L9.6 2.6 L2.2 0.9 Z" fill="url(#gTipV)"/>
  <path d="M9.4 -2.8 L33 -2.8 Q35.8 -2.8 35.8 0 Q35.8 2.8 33 2.8 L9.4 2.8 Z" fill="url(#gYelV)"/>
  <rect x="12" y="0.5" width="15.5" height="1.9" fill="#3a3a2c"/>
 </g>
</g>
<!-- cursor -->
<path d="M515.2 975.2 L526.4 987.5 L522 988.7 L526.1 998.1 L523.1 999.3 L519 990.5 L515.2 992.8 Z" fill="url(#gCur)" stroke="#d0d0d4" stroke-width=".5" stroke-linejoin="round"/>
<!-- pointing hand -->
<g>
 <path d="M555.9 970 V974.4 M555.9 979.2 V983.6 M549 976.8 H553.4 M558.4 976.8 H562.8 M551.2 972 L553.6 974.4 M560.6 972 L558.4 974.4 M551.2 981.6 L553.6 979.4" stroke="#e8d84c" stroke-width="1.5" fill="none"/>
 <path d="M559.6 979.6 Q558.4 978 559.8 977 Q561.2 976.2 562.6 977.8 L569.4 986.4 Q570.4 984.4 572.6 985.2 Q573.6 983.8 575.6 984.4 Q576.8 983.2 578.6 984.2 Q581.6 987.4 583 992 Q584 997 580.6 999.6 Q577.4 1001.6 574.4 999.8 Q569.6 996 564 995.4 Q562.2 994.6 563 993 Q564.4 991.6 568.6 992.6 Z" fill="url(#gSkin)" stroke="#b49484" stroke-width=".8" stroke-linejoin="round"/>
 <path d="M572.6 985.2 L574.6 988.4 M575.6 984.4 L577.8 987.6" stroke="#c4a494" stroke-width=".6" fill="none"/>
</g>
<!-- open hand -->
<path d="M607 978.6 Q606.4 976.8 607.8 976.4 Q609 976.2 609.8 977.8 L613 984.4 L611.4 975.6 Q611.2 974 612.6 973.8 Q614 973.8 614.4 975.4 L616.4 983.6 L615.8 975.4 Q615.8 973.8 617.2 973.8 Q618.6 973.8 618.8 975.4 L620 984 L621 978 Q621.4 976.4 622.6 976.6 Q624 977 623.8 978.6 L623.4 987 Q628 992 627 998 Q626 1000.6 622.6 999.8 Q616 997.6 612 994.6 Q609 992.4 606.2 992.6 Q604.8 992 605.6 990.6 Q607.4 989.2 610.4 990.4 L611.8 991 Z" fill="url(#gSkin)" stroke="#b49484" stroke-width=".8" stroke-linejoin="round"/>
<!-- zoom in -->
<g>
 <path d="M666.4 989.6 L676.8 999.6" stroke="#3c3c3c" stroke-width="4.6" stroke-linecap="round"/>
 <path d="M667 989.2 L677.4 999" stroke="#7c7c7c" stroke-width="1" stroke-linecap="round"/>
 <circle cx="659.3" cy="982.3" r="8.2" fill="url(#gLens)" stroke="#4a5070" stroke-width="1.9"/>
 <path d="M657.6 977.6 h3.4 v3 h3 v3.4 h-3 v3 h-3.4 v-3 h-3 v-3.4 h3 Z" fill="#fcfcfc" stroke="#7c7c7c" stroke-width=".8" stroke-linejoin="round"/>
</g>
<!-- zoom out -->
<g>
 <path d="M714.4 989.6 L724.8 999.6" stroke="#3c3c3c" stroke-width="4.6" stroke-linecap="round"/>
 <path d="M715 989.2 L725.4 999" stroke="#7c7c7c" stroke-width="1" stroke-linecap="round"/>
 <circle cx="707.4" cy="982.3" r="8.2" fill="url(#gLens)" stroke="#4a5070" stroke-width="1.9"/>
 <rect x="702.6" y="981" width="9.8" height="3" rx="1.2" fill="#fcfcfc" stroke="#7c7c7c" stroke-width=".8"/>
</g>
<!-- laser -->
<g>
 <path d="M757.4 989.2 L748.6 999" stroke="#f0a0a0" stroke-width="2.2" stroke-linecap="round" opacity=".45"/>
 <path d="M757.4 989.2 L748.6 999" stroke="#e03838" stroke-width=".7" opacity=".85"/>
 <circle cx="748.8" cy="998.8" r="1.1" fill="#e02020"/>
 <g transform="translate(757.2 989.3) rotate(-40.7)">
  <path d="M0 -2.2 L6.4 -2.6 L6.4 2.6 L0 2.2 Z" fill="url(#gLasF)"/>
  <path d="M6.2 -2.7 L19.6 -2.7 Q22.2 -2.7 22.2 0 Q22.2 2.7 19.6 2.7 L6.2 2.7 Z" fill="url(#gLasB)"/>
  <ellipse cx="10" cy="-0.4" rx="1.7" ry="1" fill="#1c1c1c"/>
  <rect x="6" y="-2.7" width=".9" height="5.4" fill="#555"/>
 </g>
</g>
<!-- line -->
<g>
 <path d="M797.2 998.6 L818.9 975.9" stroke="#0a0a0a" stroke-width="1.5"/>
 <circle cx="797.2" cy="998.6" r="2" fill="#0a0a0a"/><circle cx="818.9" cy="975.9" r="2" fill="#0a0a0a"/>
</g>
<!-- text tool -->
<g>
 <text x="844.4" y="997" font-family="Liberation Serif, serif" font-style="italic" font-weight="bold" font-size="27" fill="#141414">A</text>
 <path d="M863 976.8 Q865.2 976.8 865.4 978.4 Q865.6 976.8 867.8 976.8 M865.4 978 V997.4 M863 998.8 Q865.2 998.8 865.4 997.2 Q865.6 998.8 867.8 998.8" stroke="#141414" stroke-width="1" fill="none"/>
</g>
<!-- capture -->
<g>
 <rect x="892.6" y="976.4" width="25" height="21.4" fill="#88c4d4" stroke="#3c80f4" stroke-width="1.2" stroke-dasharray="3 1.2 1 1.2"/>
 <path d="M903 996.8 L917 992.4 L917.2 994.2 L904 999 Z" fill="#d8d8d8" stroke="#8c8c8c" stroke-width=".5"/>
 <path d="M903 998.8 L917 1001 L916.6 1002.6 L903.6 1000.6 Z" fill="#c4c4c4" stroke="#8c8c8c" stroke-width=".5"/>
 <ellipse cx="897.4" cy="994.6" rx="3.4" ry="2" transform="rotate(12 897.4 994.6)" fill="none" stroke="#2c44a4" stroke-width="1.5"/>
 <ellipse cx="897.6" cy="1000.6" rx="3.4" ry="2" transform="rotate(-10 897.6 1000.6)" fill="none" stroke="#2c44a4" stroke-width="1.5"/>
 <path d="M900.4 995.6 L905 998 L900.6 1000" stroke="#2c44a4" stroke-width="1.5" fill="none"/>
</g>
<!-- keyboard -->
<g>
 <rect x="937.2" y="979.4" width="29.6" height="16.4" rx="1" fill="#606060"/>
 <rect x="937.9" y="980.1" width="28.2" height="13.6" fill="#8a8a8a"/>
 <g stroke="#f6f6f6" stroke-width="2.2" fill="none">
  <path d="M938.1 981.4 H966" stroke-dasharray="2.05 0.52"/>
  <path d="M938.1 984.2 H966" stroke-dasharray="3 0.52 2.05 0.52 2.05 0.52 2.05 0.52 2.05 0.52 2.05 0.52 2.05 0.52 2.05 0.52 2.05 0.52 3.2 0"/>
  <path d="M938.1 987 H966" stroke-dasharray="3.6 0.52 2.05 0.52 2.05 0.52 2.05 0.52 2.05 0.52 2.05 0.52 2.05 0.52 2.05 0.52 4.6 0"/>
  <path d="M938.1 989.8 H966" stroke-dasharray="4.4 0.52 2.05 0.52 2.05 0.52 2.05 0.52 2.05 0.52 2.05 0.52 2.05 0.52 5.2 0"/>
  <path d="M938.1 992.5 H966" stroke-width="2" stroke-dasharray="2.6 0.52 2.6 0.52 14.4 0.52 2.6 0.52 3.6 0"/>
 </g>
</g>
<!--MORE-->



</svg>

</body>
</html>
